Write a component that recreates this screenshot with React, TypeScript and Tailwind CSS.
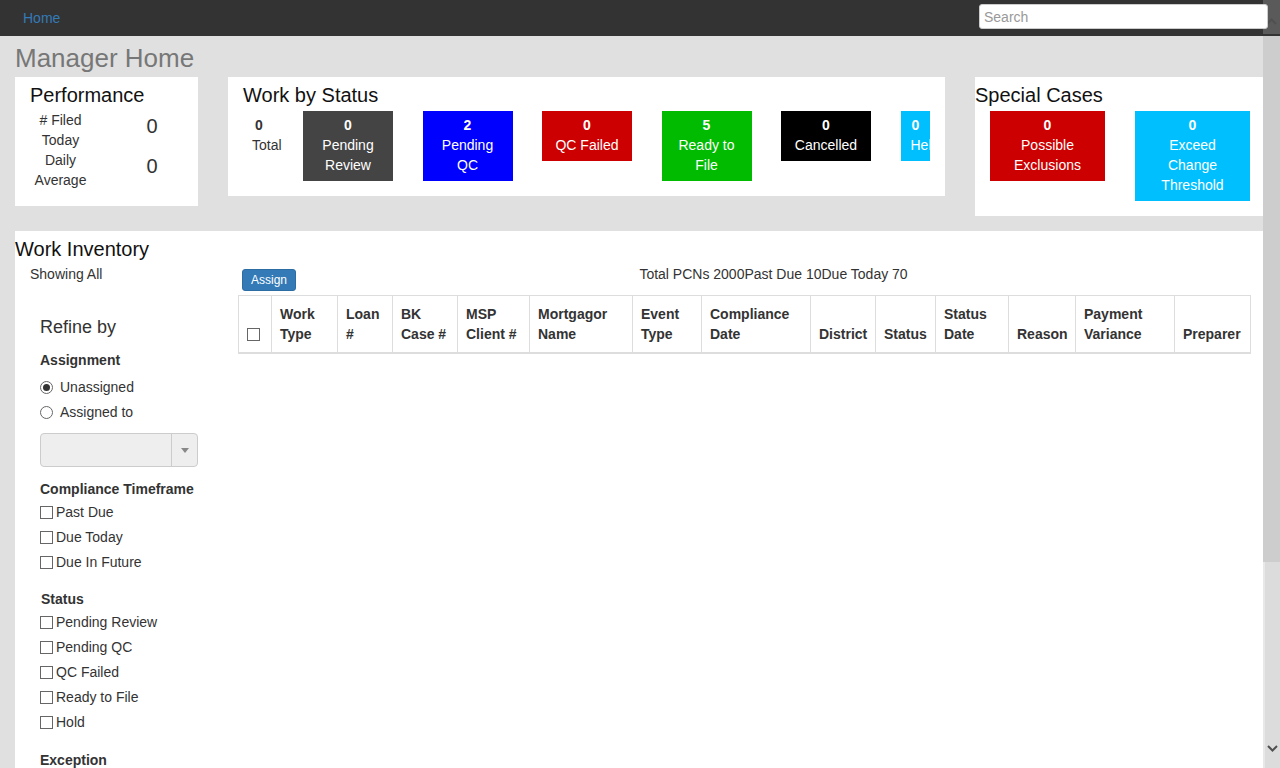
import React from 'react';

const statusTiles = [
  { count: 0, label: 'Pending Review', bg: 'bg-[#444444]', width: 'w-[90px]' },
  { count: 2, label: 'Pending QC', bg: 'bg-[#0000ff]', width: 'w-[90px]' },
  { count: 0, label: 'QC Failed', bg: 'bg-[#cc0000]', width: 'w-[90px]' },
  { count: 5, label: 'Ready to File', bg: 'bg-[#00bb00]', width: 'w-[90px]' },
  { count: 0, label: 'Cancelled', bg: 'bg-[#000000]', width: 'w-[90px]' },
  { count: 0, label: 'Held', bg: 'bg-[#00bfff]', width: 'w-[30px]' },
];

const specialTiles = [
  { count: 0, label: 'Possible Exclusions', bg: 'bg-[#cc0000]', width: 'w-[115px]' },
  { count: 0, label: 'Exceed Change Threshold', bg: 'bg-[#00bfff]', width: 'w-[115px]' },
];

const columns = [
  { label: 'Work Type', w: 66 },
  { label: 'Loan #', w: 55 },
  { label: 'BK Case #', w: 65 },
  { label: 'MSP Client #', w: 72 },
  { label: 'Mortgagor Name', w: 103 },
  { label: 'Event Type', w: 69 },
  { label: 'Compliance Date', w: 109 },
  { label: 'District', w: 65 },
  { label: 'Status', w: 60 },
  { label: 'Status Date', w: 73 },
  { label: 'Reason', w: 67 },
  { label: 'Payment Variance', w: 99 },
  { label: 'Preparer', w: 76 },
];

const Checkbox: React.FC = () => (
  <span className="inline-block w-[13px] h-[13px] border border-[#666] bg-white shrink-0" />
);

const Radio: React.FC<{ checked?: boolean }> = ({ checked }) => (
  <span className="inline-flex items-center justify-center w-[13px] h-[13px] rounded-full border border-[#666] bg-white shrink-0">
    {checked && <span className="w-[7px] h-[7px] rounded-full bg-[#333]" />}
  </span>
);

const CheckRow: React.FC<{ label: string }> = ({ label }) => (
  <div className="flex items-center h-5 mt-[5px] first:mt-[3px]">
    <Checkbox />
    <span className="ml-[3px]">{label}</span>
  </div>
);

const Tile: React.FC<{ count: number; label: string; bg: string; width: string }> = ({ count, label, bg, width }) => (
  <div className={`${width} ${bg} shrink-0 overflow-hidden px-[10px] pt-[4px] pb-[6px] text-center text-white leading-5`}>
    <div className="font-bold">{count}</div>
    <div>{label}</div>
  </div>
);

const Chevron: React.FC<{ up?: boolean }> = ({ up }) => (
  <svg width="11" height="7" viewBox="0 0 11 7">
    <polyline
      points={up ? '1,6 5.5,1.5 10,6' : '1,1 5.5,5.5 10,1'}
      fill="none"
      stroke="#505050"
      strokeWidth="2"
    />
  </svg>
);

export default function App() {
  return (
    <div className="h-screen flex flex-col text-[14px] text-[#333] font-['Liberation_Sans',Arial,sans-serif]">
      {/* top nav */}
      <div className="relative h-[36px] shrink-0 bg-[#333333] flex items-start justify-between">
        <a className="ml-[23px] mt-[8px] leading-5 text-[#337ab7]">Home</a>
        <span className="absolute right-0 top-0 w-[17px] h-[34px] bg-[#5a5a5a] flex items-center justify-center pt-[8px]">
          <Chevron up />
        </span>
        <input
          className="relative z-10 mt-[4px] mr-[12px] w-[289px] h-[25px] rounded-[3px] border border-[#ccc] bg-white px-[4px] text-[14px] text-[#555] placeholder:text-[#999] outline-none"
          placeholder="Search"
        />
      </div>

      <div className="flex-1 min-h-0 flex">
        <div className="flex-1 overflow-y-scroll bg-[#e0e0e0] pl-[15px] pt-[8px]">
          <h1 className="text-[26px] leading-[29px] text-[#777]">Manager Home</h1>

          {/* summary cards */}
          <div className="flex items-start mt-[4px]">
            <div className="w-[183px] shrink-0 bg-white pt-[7px] pb-[16px] px-[15px]">
              <h3 className="text-[20px] leading-[22px] text-[#111]">Performance</h3>
              <div className="mt-[4px]">
                <div className="flex h-[40px]">
                  <div className="w-[61px] text-center leading-5">
                    # Filed
                    <br />
                    Today
                  </div>
                  <div className="w-[60px] ml-[31px] text-center text-[20px] leading-[29px] pt-[2px]">0</div>
                </div>
                <div className="flex h-[40px]">
                  <div className="w-[61px] text-center leading-5">
                    Daily
                    <br />
                    Average
                  </div>
                  <div className="w-[60px] ml-[31px] text-center text-[20px] leading-[29px] pt-[2px]">0</div>
                </div>
              </div>
            </div>

            <div className="w-[717px] shrink-0 ml-[30px] bg-white pt-[7px] pb-[15px] px-[15px]">
              <h3 className="text-[20px] leading-[22px] text-[#111]">Work by Status</h3>
              <div className="mt-[5px] flex items-start overflow-hidden">
                <div className="w-[33px] ml-[9px] mr-[18px] shrink-0 pt-[4px] leading-5">
                  <div className="font-bold pl-[3px]">0</div>
                  <div>Total</div>
                </div>
                <div className="flex items-start gap-[29.5px]">
                  {statusTiles.map(t => (
                    <Tile key={t.label} {...t} />
                  ))}
                </div>
              </div>
            </div>

            <div className="flex-1 ml-[30px] bg-white pt-[7px] pb-[15px]">
              <h3 className="text-[20px] leading-[22px] text-[#111]">Special Cases</h3>
              <div className="mt-[5px] ml-[15px] flex items-start gap-[30px]">
                {specialTiles.map(t => (
                  <Tile key={t.label} {...t} />
                ))}
              </div>
            </div>
          </div>

          {/* work inventory */}
          <div className="mt-[15px] bg-white pt-[7px] pb-[180px]">
            <h3 className="text-[20px] leading-[22px] text-[#111]">Work Inventory</h3>
            <div className="flex items-start mt-[4px]">
              <div className="w-[223px] shrink-0 px-[15px]">
                <div className="leading-5">Showing All</div>
                <div className="pl-[10px]">
                  <h4 className="mt-[33px] text-[18px] leading-5">Refine by</h4>

                  <div className="mt-[13px] font-bold leading-5">Assignment</div>
                  <div className="flex items-center h-5 mt-[7px]">
                    <Radio checked />
                    <span className="ml-[7px]">Unassigned</span>
                  </div>
                  <div className="flex items-center h-5 mt-[5px]">
                    <Radio />
                    <span className="ml-[7px]">Assigned to</span>
                  </div>
                  <div className="mt-[11px] w-[158px] h-[34px] rounded-[4px] border border-[#ccc] bg-[#eeeeee] flex justify-end">
                    <div className="w-[26px] border-l border-[#ccc] flex items-center justify-center">
                      <span className="w-0 h-0 border-l-[4px] border-r-[4px] border-t-[5px] border-l-transparent border-r-transparent border-t-[#888]" />
                    </div>
                  </div>

                  <div className="mt-[12px] font-bold leading-5">Compliance Timeframe</div>
                  <div>
                    <CheckRow label="Past Due" />
                    <CheckRow label="Due Today" />
                    <CheckRow label="Due In Future" />
                  </div>

                  <div className="mt-[17px] ml-[1px] font-bold leading-5">Status</div>
                  <div>
                    <CheckRow label="Pending Review" />
                    <CheckRow label="Pending QC" />
                    <CheckRow label="QC Failed" />
                    <CheckRow label="Ready to File" />
                    <CheckRow label="Hold" />
                  </div>

                  <div className="mt-[18px] font-bold leading-5">Exception</div>
                  <div>
                    <CheckRow label="Possible Exclusions" />
                    <CheckRow label="Exceed Change Threshold" />
                  </div>
                </div>
              </div>

              <div className="flex-1 pr-[13px]">
                <div className="flex items-start">
                  <button className="ml-[4px] mt-[5px] h-[22px] px-[8px] rounded-[3px] border border-[#2e6da4] bg-[#337ab7] text-white text-[12px] leading-[18px]">
                    Assign
                  </button>
                  <div className="flex-1 text-center leading-5">Total PCNs 2000Past Due 10Due Today 70</div>
                </div>
                <table className="mt-[4px] w-full table-fixed border-collapse border border-[#ddd]">
                  <colgroup>
                    <col className="w-[33px]" />
                    {columns.map(c => (
                      <col key={c.label} style={{ width: c.w }} />
                    ))}
                  </colgroup>
                  <thead>
                    <tr>
                      <th className="border border-[#ddd] border-b-2 px-[8px] py-[8px] align-bottom text-left">
                        <div className="h-5 flex items-center">
                          <Checkbox />
                        </div>
                      </th>
                      {columns.map(c => (
                        <th
                          key={c.label}
                          className="border border-[#ddd] border-b-2 px-[8px] py-[8px] align-bottom text-left font-bold leading-5"
                        >
                          {c.label}
                        </th>
                      ))}
                    </tr>
                  </thead>
                </table>
              </div>
            </div>
          </div>
        </div>

        {/* scrollbar */}
        <div className="w-[17px] shrink-0 flex flex-col bg-[#dcdcdc]">
          <div className="h-[526px] bg-[#cdcdcd]" />
          <div className="flex-1 border-l-2 border-[#e8e8e8] flex flex-col justify-end items-center pb-[16px]">
            <Chevron />
          </div>
        </div>
      </div>
    </div>
  );
}
